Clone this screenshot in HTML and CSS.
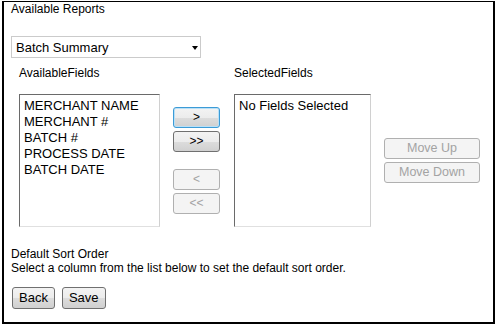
FILE: index.html
```html
<!DOCTYPE html>
<html>
<head>
<meta charset="utf-8">
<title>Available Reports</title>
<link rel="stylesheet" href="styles.css">
</head>
<body>
<div class="panel">
  <div class="title">Available Reports</div>
  <div class="select-wrap">
    <select class="report-select">
      <option>Batch Summary</option>
    </select>
  </div>
  <div class="fields">
    <div class="label">AvailableFields</div>
    <div></div>
    <div class="label">SelectedFields</div>
    <div></div>

    <ul class="list">
      <li>MERCHANT NAME</li>
      <li>MERCHANT #</li>
      <li>BATCH #</li>
      <li>PROCESS DATE</li>
      <li>BATCH DATE</li>
    </ul>
    <div class="mid-col">
      <button class="btn arrow focus">&gt;</button>
      <button class="btn arrow">&gt;&gt;</button>
      <button class="btn arrow disabled gap">&lt;</button>
      <button class="btn arrow disabled">&lt;&lt;</button>
    </div>
    <ul class="list">
      <li>No Fields Selected</li>
    </ul>
    <div class="move-col">
      <button class="btn move disabled">Move Up</button>
      <button class="btn move disabled">Move Down</button>
    </div>
  </div>
  <div class="sort">
    <div>Default Sort Order</div>
    <div>Select a column from the list below to set the default sort order.</div>
  </div>
  <div class="actions">
    <button class="btn action">Back</button>
    <button class="btn action">Save</button>
  </div>
</div>
</body>
</html>
```

FILE: styles.css
```css
html, body {
  margin: 0;
  padding: 0;
  background: #ffffff;
}

body {
  font-family: "Liberation Sans", Arial, sans-serif;
  color: #000;
}

.panel {
  margin: 1px 0 0 2px;
  width: 489px;
  height: 320px;
  border: 2px solid #000;
  border-top-width: 1px;
}

.title {
  padding-left: 7px;
  font-size: 12px;
  line-height: 14px;
  height: 14px;
}

.select-wrap {
  position: relative;
  margin: 20px 0 0 7px;
  width: 190px;
  height: 22px;
}

.select-wrap::after {
  content: "";
  position: absolute;
  right: 3px;
  top: 10px;
  width: 0;
  height: 0;
  border-left: 3.5px solid transparent;
  border-right: 3.5px solid transparent;
  border-top: 4px solid #000;
  pointer-events: none;
}

.report-select {
  appearance: none;
  -webkit-appearance: none;
  box-sizing: border-box;
  width: 100%;
  height: 22px;
  margin: 0;
  padding: 0 0 0 4px;
  border: 1px solid #cbcbcb;
  border-radius: 0;
  background: #fff;
  font-family: "Liberation Sans", Arial, sans-serif;
  font-size: 13px;
  color: #000;
  outline: none;
}

.fields {
  display: grid;
  grid-template-columns: 141px 48px 137px 96px;
  column-gap: 13px;
  row-gap: 14px;
  margin: 8px 0 0 15px;
}

.label {
  font-size: 12px;
  line-height: 14px;
}

.list {
  box-sizing: border-box;
  height: 133px;
  margin: 0;
  padding: 3px 4px;
  list-style: none;
  border: 1px solid;
  border-color: #6a6a6a #d0d0d0 #e0e0e0 #6a6a6a;
  background: #fff;
  font-size: 13px;
  line-height: 16px;
}

.mid-col {
  display: flex;
  flex-direction: column;
  align-items: flex-start;
  gap: 3px;
  padding-top: 13px;
}

.move-col {
  display: flex;
  flex-direction: column;
  gap: 3px;
  padding-top: 44px;
}

.btn {
  box-sizing: border-box;
  margin: 0;
  font-family: "Liberation Sans", Arial, sans-serif;
  color: #000;
  border: 1px solid #707070;
  border-radius: 3px;
  background: linear-gradient(#f3f3f3, #ececec 50%, #dddddd 50%, #d0d0d0);
  cursor: pointer;
}

.arrow {
  width: 47px;
  height: 21px;
  padding: 0;
  font-size: 12px;
  line-height: 19px;
}

.arrow.gap {
  margin-top: 14px;
}

.focus {
  border-color: #3c9bd6;
  box-shadow: inset 0 0 0 1px #b9e0f7;
}

.disabled {
  color: #a3a3a3;
  border-color: #b0b0b0;
  background: #f4f4f4;
}

.move {
  width: 96px;
  height: 21px;
  padding: 0;
  font-size: 12.5px;
  line-height: 19px;
}

.sort {
  margin: 20px 0 0 7px;
  font-size: 12px;
  line-height: 14px;
}

.actions {
  display: flex;
  gap: 7px;
  margin: 12px 0 0 8px;
}

.action {
  height: 22px;
  padding: 0 6px;
  font-size: 13px;
  line-height: 20px;
}
```
